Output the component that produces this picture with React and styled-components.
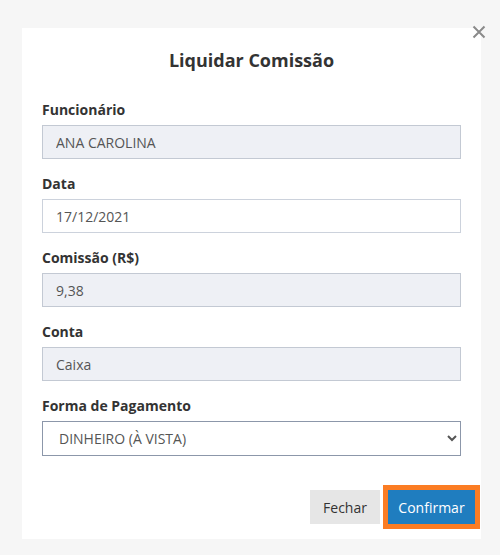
import React from 'react';
import styled, {createGlobalStyle} from 'styled-components';

const GlobalStyle = createGlobalStyle`
  body {
    margin: 0;
    background: #ffffff;
    font-family: 'Open Sans', 'Liberation Sans', sans-serif;
  }
`;

const Backdrop = styled.div`
  width: 500px;
  height: 555px;
  background: #f6f6f6;
  padding: 28px 0 0 22px;
  box-sizing: border-box;
`;

const Panel = styled.div`
  position: relative;
  width: 459px;
  height: 511px;
  background: #ffffff;
  box-sizing: border-box;
  padding: 20px 20px 15px 20px;
  display: flex;
  flex-direction: column;
`;

const CloseButton = styled.button`
  position: absolute;
  top: -4px;
  right: -6px;
  width: 16px;
  height: 16px;
  padding: 0;
  border: none;
  background: transparent;
  display: flex;
  align-items: center;
  justify-content: center;
  cursor: pointer;
`;

const Title = styled.h2`
  margin: 0 0 28px;
  font-size: 18px;
  line-height: 24px;
  font-weight: 700;
  color: #333333;
  text-align: center;
`;

const Field = styled.div`
  display: flex;
  flex-direction: column;
  gap: 5px;
  margin-bottom: 15px;
`;

const Label = styled.label`
  font-size: 14px;
  line-height: 20px;
  font-weight: 700;
  color: #333333;
`;

const Input = styled.input`
  height: 34px;
  box-sizing: border-box;
  padding: 0 13px;
  font-family: inherit;
  font-size: 14px;
  color: #555555;
  background: ${({readOnly}) => (readOnly ? '#eef0f5' : '#ffffff')};
  border: 1px solid ${({readOnly}) => (readOnly ? '#c3c9d3' : '#ccd2dc')};
  border-radius: 0;
  outline: none;
`;

const SelectWrap = styled.div`
  position: relative;
  height: 35px;
`;

const Select = styled.select`
  width: 100%;
  height: 100%;
  box-sizing: border-box;
  padding: 0 30px 0 16px;
  font-family: inherit;
  font-size: 14px;
  color: #555555;
  background: #ffffff;
  border: 1px solid #8c97aa;
  border-radius: 0;
  appearance: none;
  outline: none;
`;

const Chevron = styled.svg`
  position: absolute;
  right: 3px;
  top: 12px;
  pointer-events: none;
`;

const Footer = styled.div`
  margin-top: auto;
  display: flex;
  justify-content: flex-end;
  gap: 8px;
  margin-right: -14px;
`;

const Button = styled.button`
  width: ${({primary}) => (primary ? '87px' : '70px')};
  height: 34px;
  box-sizing: border-box;
  border: none;
  border-radius: 0;
  font-family: inherit;
  font-size: 14px;
  padding: 0;
  color: ${({primary}) => (primary ? '#ffffff' : '#333333')};
  background: ${({primary}) => (primary ? '#1f7dbf' : '#e6e6e6')};
  outline: ${({focused}) => (focused ? '5px solid #fb7c23' : 'none')};
  cursor: pointer;
`;

const App = () => (
  <>
    <GlobalStyle />
    <Backdrop>
      <Panel>
        <CloseButton aria-label="Fechar">
          <svg width="14" height="14" viewBox="0 0 14 14">
            <path d="M1.5 1.5 L12.5 12.5 M12.5 1.5 L1.5 12.5" stroke="#8a8a8a" strokeWidth="2" />
          </svg>
        </CloseButton>
        <Title>Liquidar Comissão</Title>
        <Field>
          <Label>Funcionário</Label>
          <Input readOnly value="ANA CAROLINA" />
        </Field>
        <Field>
          <Label>Data</Label>
          <Input value="17/12/2021" onChange={() => {}} />
        </Field>
        <Field>
          <Label>Comissão (R$)</Label>
          <Input readOnly value="9,38" />
        </Field>
        <Field>
          <Label>Conta</Label>
          <Input readOnly value="Caixa" />
        </Field>
        <Field>
          <Label>Forma de Pagamento</Label>
          <SelectWrap>
            <Select defaultValue="dinheiro">
              <option value="dinheiro">DINHEIRO (À VISTA)</option>
            </Select>
            <Chevron width="12" height="10" viewBox="0 0 12 10">
              <path d="M2 3 L6 7 L10 3" stroke="#555" strokeWidth="2" fill="none" />
            </Chevron>
          </SelectWrap>
        </Field>
        <Footer>
          <Button>Fechar</Button>
          <Button primary focused>Confirmar</Button>
        </Footer>
      </Panel>
    </Backdrop>
  </>
);

export default App;
